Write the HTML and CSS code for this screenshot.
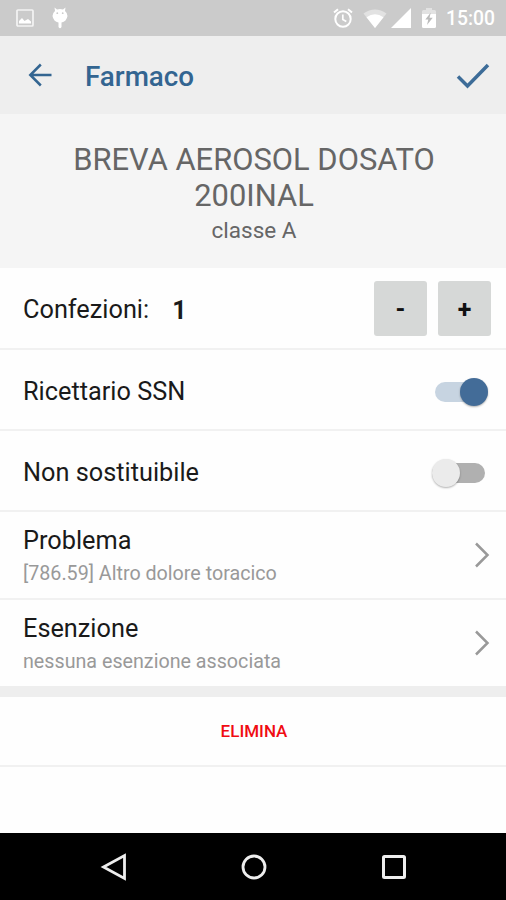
FILE: index.html
```html
<!DOCTYPE html>
<html lang="it">
  <head>
    <meta charset="UTF-8" />
    <meta name="viewport" content="width=device-width, initial-scale=1.0" />
    <title>Farmaco</title>
    <link rel="stylesheet" href="styles.css" />
  </head>
  <body>
    <div class="status-bar">
      <div class="notifications">
        <svg width="18" height="18" viewBox="0 0 18 18">
          <rect x="1" y="1" width="16" height="16" rx="1" fill="none" stroke="#f4f4f4" stroke-width="1.7" />
          <path d="M3 14.500 V12 L6 9 L8.500 12 L12 10 L15 12.500 V14.500 Z" fill="#fff" />
        </svg>
        <svg width="16" height="22" viewBox="0 0 16 22">
          <path d="M2.500 0.500 L5 2.500 Q8 1.500 11 2.500 L13.500 0.500 L13 4 Q15.500 6 15.500 9 Q14.500 14.500 9.500 15.500 V20 Q8 22.500 6.500 20 V15.500 Q1.500 14.500 0.500 9 Q0.500 6 3 4 Z" fill="#fff" />
          <circle cx="5.300" cy="6.200" r="0.900" fill="#ccc" />
          <circle cx="10.700" cy="6.200" r="0.900" fill="#ccc" />
        </svg>
      </div>
      <div class="system">
        <svg class="alarm" width="20" height="20" viewBox="0 0 20 20" fill="none" stroke="#fff">
          <circle cx="10" cy="11" r="7.700" stroke-width="2" />
          <path d="M1 4.500 L5 1.200 M19 4.500 L15 1.200" stroke-width="2" />
          <path d="M9.800 6.500 V11.500 L13.300 13.500" stroke-width="1.700" />
        </svg>
        <svg class="wifi" width="24" height="19" viewBox="0 0 24 19">
          <path d="M0.500 4.500 Q12 -3.500 23.500 4.500 L12 19 Z" fill="#e2e2e2" />
          <path d="M3.500 8.200 Q12 2.500 20.500 8.200 L12 19 Z" fill="#fff" />
        </svg>
        <svg class="signal" width="20" height="20" viewBox="0 0 20 20">
          <path d="M20 0 V20 H0 Z" fill="#fff" />
        </svg>
        <svg class="battery" width="14" height="20" viewBox="0 0 14 20">
          <path d="M4 2 V0 H10 V2 H12.500 Q14 2 14 3.500 V8 H0 V3.500 Q0 2 1.500 2 Z" fill="#e2e2e2" />
          <path d="M0 6 H14 V18.500 Q14 20 12.500 20 H1.500 Q0 20 0 18.500 Z" fill="#fff" />
          <path d="M8.800 4.500 L3.300 11.500 H6.300 L5 17 L10.700 9.800 H7.500 Z" fill="#bbb" />
        </svg>
        <span class="clock">15:00</span>
      </div>
    </div>

    <div class="app-bar">
      <svg class="back" width="24" height="24" viewBox="0 0 24 24" fill="none" stroke="#336591" stroke-width="2.500">
        <path d="M23.500 12 H2.500 M12.800 1.500 L2.300 12 L12.800 22.500" />
      </svg>
      <h1>Farmaco</h1>
      <svg class="confirm" width="34" height="26" viewBox="0 0 34 26" fill="none" stroke="#3d6c98" stroke-width="3.500">
        <path d="M2 13.500 L11.500 23 L32 2" />
      </svg>
    </div>

    <div class="drug">
      <h2>BREVA AEROSOL DOSATO 200INAL</h2>
      <p>classe A</p>
    </div>

    <div class="row packs">
      <span class="label">Confezioni:</span>
      <span class="quantity">1</span>
      <div class="stepper">
        <button>-</button>
        <button>+</button>
      </div>
    </div>
    <div class="row">
      <span class="label">Ricettario SSN</span>
      <div class="switch on"><div class="knob"></div></div>
    </div>
    <div class="row">
      <span class="label">Non sostituibile</span>
      <div class="switch"><div class="knob"></div></div>
    </div>
    <div class="row link">
      <div>
        <div class="label">Problema</div>
        <div class="detail">[786.59] Altro dolore toracico</div>
      </div>
      <svg class="chevron" width="16" height="26" viewBox="0 0 16 26" fill="none" stroke="#999" stroke-width="2.500">
        <path d="M2 1.500 L13.500 13 L2 24.500" />
      </svg>
    </div>
    <div class="row link last">
      <div>
        <div class="label">Esenzione</div>
        <div class="detail">nessuna esenzione associata</div>
      </div>
      <svg class="chevron" width="16" height="26" viewBox="0 0 16 26" fill="none" stroke="#999" stroke-width="2.500">
        <path d="M2 1.500 L13.500 13 L2 24.500" />
      </svg>
    </div>

    <button class="delete">ELIMINA</button>

    <div class="nav-bar">
      <svg width="28" height="30" viewBox="0 0 28 30" fill="none" stroke="#eee" stroke-width="2.800">
        <path d="M24.500 3.500 V26.500 L3.500 15 Z" />
      </svg>
      <svg width="28" height="30" viewBox="0 0 28 30" fill="none" stroke="#eee" stroke-width="2.800">
        <circle cx="14" cy="15" r="11" />
      </svg>
      <svg width="28" height="30" viewBox="0 0 28 30" fill="none" stroke="#eee" stroke-width="3">
        <rect x="3.500" y="4.500" width="21" height="21" rx="1" />
      </svg>
    </div>
  </body>
</html>
```
FILE: styles.css
```css
* {
  box-sizing: border-box;
}

body {
  display: flex;
  flex-direction: column;
  height: 100vh;
  margin: 0;
  background-color: #fefefe;
  color: #1a1a1a;
  font-family: Roboto, sans-serif;
}

h1,
h2,
p {
  margin: 0;
}

button {
  padding: 0;
  border: none;
  font-family: inherit;
}

svg {
  flex-shrink: 0;
}

.status-bar {
  display: flex;
  justify-content: space-between;
  height: 36px;
  padding: 0 11px 0 16px;
  background-color: #cbcbcb;
}

.notifications,
.system {
  display: flex;
  align-items: center;
}

.notifications {
  gap: 18px;
}

.alarm {
  margin-right: 10px;
}

.wifi {
  margin-right: 4px;
}

.signal {
  margin-right: 11px;
}

.battery {
  margin-right: 10px;
}

.clock {
  color: #fff;
  font-size: 19.3px;
  font-weight: 500;
  line-height: 38px;
  padding-top: 2px;
}

.app-bar {
  display: flex;
  align-items: center;
  height: 78px;
  padding: 0 16px 0 28px;
  background-color: #eee;
}

.app-bar h1 {
  margin-left: 33px;
  padding-top: 2px;
  color: #336591;
  font-size: 27.8px;
  font-weight: 500;
}

.confirm {
  margin-top: 2px;
  margin-left: auto;
}

.drug {
  height: 154px;
  padding: 28px 59px 0 61px;
  background-color: #f5f5f5;
  color: #666;
  text-align: center;
}

.drug h2 {
  font-size: 30.9px;
  font-weight: 400;
  line-height: 36px;
}

.drug p {
  font-size: 22.5px;
  line-height: 32px;
}

.row {
  display: flex;
  align-items: center;
  height: 81px;
  padding: 4px 15px 0 23px;
  border-bottom: 2px solid #f1f1f1;
}

.label {
  font-size: 25.3px;
  line-height: 30px;
}

.row.packs {
  height: 82px;
  padding-top: 1px;
}

.packs .label,
.quantity {
  padding-top: 3px;
}

.quantity {
  margin-left: 23px;
  font-size: 25px;
  font-weight: 700;
}

.stepper {
  display: flex;
  gap: 11px;
  margin-left: auto;
}

.stepper button {
  width: 53px;
  height: 55px;
  padding-top: 2px;
  border-radius: 3px;
  background-color: #d6d8d7;
  color: #111;
  font-size: 25px;
  font-weight: 700;
}

.switch {
  display: flex;
  align-items: center;
  width: 53px;
  height: 20px;
  margin: 0 6px 0 auto;
  border-radius: 10px;
  background-color: #b0b0b0;
}

.knob {
  width: 28px;
  height: 28px;
  border-radius: 50%;
  background-color: #ebebeb;
  box-shadow: 0 1px 2px rgba(0, 0, 0, 0.3);
}

.switch.on {
  justify-content: flex-end;
  margin-right: 3px;
  background-color: #c7d4e1;
}

.on .knob {
  background-color: #436c98;
}

.row.link {
  justify-content: space-between;
  height: 88px;
  padding-right: 16px;
  padding-top: 7px;
}

.row.last {
  height: 97px;
  border-bottom: 11px solid #eee;
}

.detail {
  color: #999;
  font-size: 19.7px;
  line-height: 35px;
}

.chevron {
  margin-bottom: 8px;
}

.delete {
  height: 70px;
  padding-left: 2px;
  border-bottom: 2px solid #f1f1f1;
  background: none;
  color: #f00c12;
  font-size: 17px;
  font-weight: 500;
}

.nav-bar {
  display: flex;
  align-items: center;
  justify-content: center;
  gap: 112px;
  height: 67px;
  padding-left: 2px;
  margin-top: auto;
  background-color: #000;
}
```
